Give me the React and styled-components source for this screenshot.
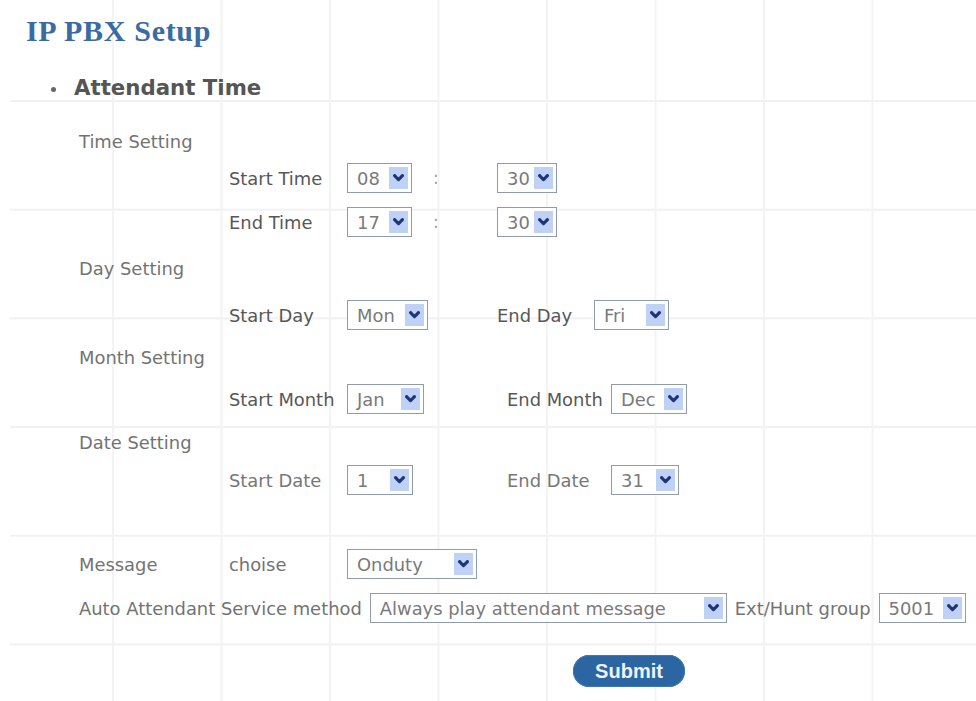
import React from 'react';
import styled, { createGlobalStyle } from 'styled-components';

const GlobalStyle = createGlobalStyle`
  html, body {
    margin: 0;
    padding: 0;
    background: #ffffff;
  }
  body {
    font-family: "DejaVu Sans", Verdana, sans-serif;
  }
`;

function Chevron() {
  return (
    <svg width="11" height="8" viewBox="0 0 11 8">
      <path d="M1.6 1.6 L5.5 5.7 L9.4 1.6" fill="none" stroke="#1f3574" strokeWidth="3.1" strokeLinecap="round" strokeLinejoin="round" />
    </svg>
  );
}

function Select({ value, width }) {
  return (
    <SelectBox $w={width}>
      <Value>{value}</Value>
      <ArrowBtn>
        <Chevron />
      </ArrowBtn>
    </SelectBox>
  );
}

export default function App() {
  return (
    <>
      <GlobalStyle />
      <Page>
        <Title>IP PBX Setup</Title>
        <SectionHead>
          <Bullet />
          Attendant Time
        </SectionHead>

        <Form>
          <Row $cols="150px" $h={38}>
            <GroupLabel>Time Setting</GroupLabel>
          </Row>
          <Row $cols="150px 118px 86px 64px auto" $h={36}>
            <span />
            <FieldLabel>Start Time</FieldLabel>
            <Select value="08" width={65} />
            <Colon>:</Colon>
            <Select value="30" width={60} />
          </Row>
          <Row $cols="150px 118px 86px 64px auto" $h={52}>
            <span />
            <FieldLabel>End Time</FieldLabel>
            <Select value="17" width={65} />
            <Colon>:</Colon>
            <Select value="30" width={60} />
          </Row>

          <Row $cols="150px" $h={40}>
            <GroupLabel>Day Setting</GroupLabel>
          </Row>
          <Row $cols="150px 118px 150px 97px auto" $h={54}>
            <span />
            <FieldLabel>Start Day</FieldLabel>
            <Select value="Mon" width={81} />
            <FieldLabel>End Day</FieldLabel>
            <Select value="Fri" width={75} />
          </Row>

          <Row $cols="150px" $h={30}>
            <GroupLabel>Month Setting</GroupLabel>
          </Row>
          <Row $cols="150px 118px 160px 104px auto" $h={54}>
            <span />
            <FieldLabel>Start Month</FieldLabel>
            <Select value="Jan" width={77} />
            <FieldLabel>End Month</FieldLabel>
            <Select value="Dec" width={76} />
          </Row>

          <Row $cols="150px" $h={32}>
            <GroupLabel>Date Setting</GroupLabel>
          </Row>
          <Row $cols="150px 118px 160px 104px auto" $h={44}>
            <span />
            <FieldLabel $light>Start Date</FieldLabel>
            <Select value="1" width={66} />
            <FieldLabel $light>End Date</FieldLabel>
            <Select value="31" width={68} />
          </Row>

          <Row $cols="150px 118px auto" $h={36} $mt={44}>
            <GroupLabel>Message</GroupLabel>
            <GroupLabel>choise</GroupLabel>
            <Select value="Onduty" width={130} />
          </Row>
          <InlineRow>
            <GroupLabel>Auto Attendant Service method</GroupLabel>
            <Select value="Always play attendant message" width={357} />
            <GroupLabel>Ext/Hunt group</GroupLabel>
            <Select value="5001" width={87} />
          </InlineRow>
        </Form>

        <SubmitRow>
          <SubmitButton type="button">Submit</SubmitButton>
        </SubmitRow>
      </Page>
    </>
  );
}

const Page = styled.div`
  position: relative;
  width: 976px;
  height: 701px;
  box-sizing: border-box;
  padding-left: 10px;
  overflow: hidden;
  background-color: #ffffff;
  background-image:
    linear-gradient(to right, #f3f3f3 0, #f3f3f3 2px, transparent 2px),
    linear-gradient(to bottom, #f1f1f1 0, #f1f1f1 2px, transparent 2px);
  background-size: 108.5px 100%, 100% 108.7px;
  background-position: 102px 0, 0 100px;
  background-origin: content-box;
  background-clip: content-box;
`;

const Title = styled.h1`
  margin: 0;
  height: 62px;
  display: flex;
  align-items: center;
  padding-left: 16px;
  font-family: "Liberation Serif", "Times New Roman", serif;
  font-weight: bold;
  font-size: 30px;
  color: #3a6ca3;
  letter-spacing: 0.7px;
`;

const SectionHead = styled.h2`
  margin: 0;
  height: 50px;
  display: flex;
  align-items: center;
  padding-left: 41px;
  font-family: "DejaVu Sans", Verdana, sans-serif;
  font-weight: bold;
  font-size: 21.3px;
  color: #555555;
`;

const Bullet = styled.span`
  width: 5px;
  height: 5px;
  border-radius: 50%;
  background: #666666;
  margin: 4px 18px 0 0;
`;

const Form = styled.div`
  padding-top: 10px;
  padding-left: 69px;
`;

const Row = styled.div`
  display: grid;
  grid-template-columns: ${p => p.$cols};
  align-items: center;
  height: ${p => p.$h}px;
  margin-top: ${p => p.$mt || 0}px;
`;

const InlineRow = styled.div`
  display: flex;
  align-items: center;
  gap: 8px;
  height: 36px;
  margin-top: 8px;
`;

const GroupLabel = styled.span`
  font-size: 17.9px;
  color: #737373;
  white-space: nowrap;
`;

const FieldLabel = styled.span`
  font-size: 17.9px;
  color: ${p => (p.$light ? '#777777' : '#575757')};
  white-space: nowrap;
`;

const Colon = styled.span`
  font-size: 17px;
  color: #a0a0a0;
`;

const SelectBox = styled.div`
  display: flex;
  align-items: stretch;
  justify-content: space-between;
  box-sizing: border-box;
  width: ${p => p.$w}px;
  height: 30px;
  padding: 3px;
  border: 1px solid #8e9cad;
  background: #ffffff;
`;

const Value = styled.span`
  display: flex;
  align-items: center;
  padding-left: 6px;
  font-size: 17.9px;
  color: #7a7a7a;
  white-space: nowrap;
  overflow: hidden;
`;

const ArrowBtn = styled.span`
  flex: none;
  width: 19px;
  display: flex;
  align-items: center;
  justify-content: center;
  background: #bfd1f6;
`;

const SubmitRow = styled.div`
  display: flex;
  align-items: center;
  height: 42px;
  margin-top: 24px;
  padding-left: 563px;
`;

const SubmitButton = styled.button`
  width: 112px;
  height: 32px;
  border: none;
  border-radius: 16px;
  background: #2b65a2;
  box-shadow: inset 0 0 0 1px #3f78b3;
  font-family: "Liberation Sans", Arial, sans-serif;
  font-weight: bold;
  font-size: 20px;
  color: #eef3f8;
  padding: 0;
  cursor: pointer;
`;
